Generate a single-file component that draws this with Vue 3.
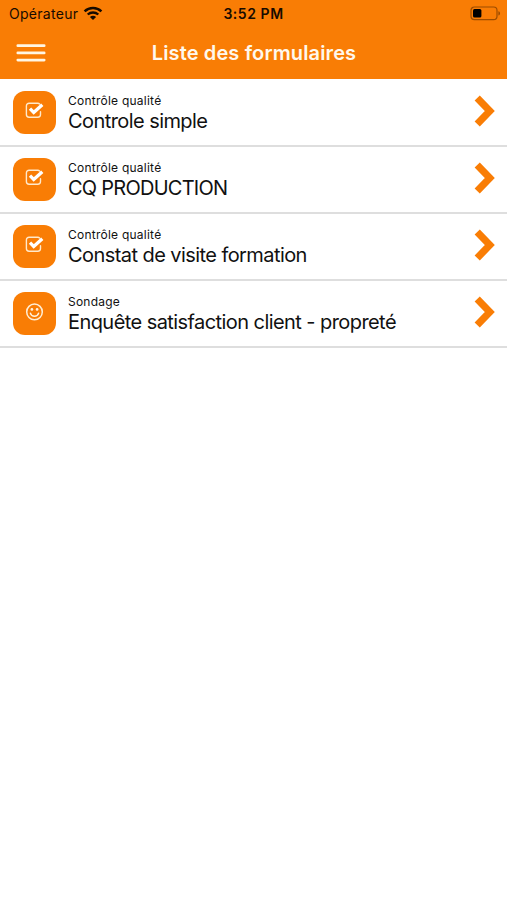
<script setup>
const forms = [
  { kind: 'Contrôle qualité', title: 'Controle simple', icon: 'check' },
  { kind: 'Contrôle qualité', title: 'CQ PRODUCTION', icon: 'check', caps: true },
  { kind: 'Contrôle qualité', title: 'Constat de visite formation', icon: 'check' },
  { kind: 'Sondage', title: 'Enquête satisfaction client - propreté', icon: 'smile' },
]
</script>

<template>
  <div class="screen">
    <header class="header">
      <div class="status">
        <div class="carrier">
          <span class="carrier-name">Opérateur</span>
          <svg class="wifi" width="20" height="15" viewBox="0 0 20 15">
            <path d="M1.6 5.3C6.3.9 13.7.9 18.4 5.3" fill="none" stroke="#170b00" stroke-width="2.5" />
            <path d="M4.7 8.5c3-2.7 7.6-2.7 10.6 0" fill="none" stroke="#170b00" stroke-width="2.3" />
            <path d="M6.9 10.9c1.8-1.6 4.4-1.6 6.2 0L10 14z" fill="#170b00" />
          </svg>
        </div>
        <span class="time">3:52 PM</span>
        <svg class="battery" width="31" height="15" viewBox="0 0 31 15">
          <rect x="1" y="1" width="26" height="12.6" rx="3.4" fill="none" stroke="#9c4c00" stroke-width="1.2" />
          <rect x="3" y="3" width="8.4" height="8.6" rx="1.5" fill="#000" />
          <path d="M28.4 5.2c2.2.7 2.2 3.6 0 4.3z" fill="#9c4c00" />
        </svg>
      </div>
      <div class="bar">
        <svg class="menu" width="30" height="20" viewBox="0 0 30 20">
          <path d="M1.8 2.7h26.4M1.8 9.9h26.4M1.8 17.1h26.4" stroke="#fff6e4" stroke-width="2.7" stroke-linecap="round" />
        </svg>
        <h1 class="heading">Liste des formulaires</h1>
      </div>
    </header>
    <ul class="list">
      <li v-for="form in forms" :key="form.title" class="row">
        <div class="tile">
          <svg v-if="form.icon === 'check'" width="20" height="18" viewBox="0 0 20 18">
            <path d="M14.6 1.9C14.1 1.4 13.5 1.2 12.8 1.2H4.1C2.5 1.2 1.4 2.3 1.4 3.9v8.7c0 1.6 1.1 2.7 2.7 2.7h8.7c1.6 0 2.7-1.1 2.7-2.7V9.7" fill="none" stroke="#ffe9cb" stroke-width="1.4" stroke-linecap="round" />
            <path d="M5 6.7l3.7 3.7L17.3 2.7" fill="none" stroke="#fff" stroke-width="3.3" />
          </svg>
          <svg v-else width="20" height="18" viewBox="0 0 20 18">
            <circle cx="9.5" cy="8.9" r="7.8" fill="none" stroke="#ffedd3" stroke-width="1.5" />
            <circle cx="6.9" cy="6.4" r="1.35" fill="#fff3df" />
            <circle cx="12.1" cy="6.4" r="1.35" fill="#fff3df" />
            <path d="M5.4 10.2c1.3 4 6.9 4 8.2 0" fill="none" stroke="#fff3df" stroke-width="1.4" stroke-linecap="round" />
          </svg>
        </div>
        <div class="texts">
          <span class="kind">{{ form.kind }}</span>
          <span class="title" :class="{ caps: form.caps }">{{ form.title }}</span>
        </div>
        <svg class="chevron" width="22" height="32" viewBox="0 0 22 32">
          <path d="M3.2 3L15.8 16 3.2 29" fill="none" stroke="#f97d05" stroke-width="7.2" />
        </svg>
      </li>
    </ul>
  </div>
</template>

<style>
body {
  background: #fff;
}
</style>

<style scoped>
.screen {
  width: 100%;
  min-height: 900px;
  background: #fff;
  color: #111;
  font-family: Inter, "Liberation Sans", sans-serif;
}
.header {
  height: 79px;
  background: #f97d05;
}
.status {
  display: grid;
  grid-template-columns: 1fr auto 1fr;
  align-items: center;
  height: 27px;
  padding: 0 6px 0 9px;
  color: #170b00;
}
.carrier {
  display: flex;
  align-items: center;
  gap: 5px;
}
.carrier-name {
  font-size: 14px;
  line-height: 20px;
  letter-spacing: 0.28px;
}
.time {
  margin-right: 3px;
  font-size: 14px;
  font-weight: 600;
  line-height: 20px;
  letter-spacing: 0.55px;
}
.battery {
  justify-self: end;
}
.bar {
  display: grid;
  grid-template-columns: 1fr auto 1fr;
  align-items: center;
  height: 52px;
  padding: 0 16px;
}
.heading {
  margin: 0 -1px 0 0;
  color: #fff8ed;
  font-size: 20px;
  font-weight: 600;
  line-height: 26px;
  letter-spacing: 0.13px;
}
.list {
  margin: 0;
  padding: 0;
  list-style: none;
}
.row {
  display: flex;
  align-items: center;
  box-sizing: border-box;
  height: 67.2px;
  padding: 0.3px 11px 0 13px;
  border-bottom: 2px solid #dedede;
}
.row:first-child {
  height: 67.6px;
  padding-top: 1.2px;
}
.tile {
  display: flex;
  justify-content: center;
  box-sizing: border-box;
  width: 43px;
  height: 43px;
  padding-top: 11px;
  border-radius: 12px;
  background: #f97d05;
}
.texts {
  display: flex;
  flex: 1;
  flex-direction: column;
  margin-left: 12px;
  padding-top: 2px;
  white-space: nowrap;
}
.kind {
  font-size: 12px;
  line-height: 16px;
  letter-spacing: 0.24px;
}
.title {
  font-size: 20px;
  line-height: 25px;
  letter-spacing: -0.57px;
}
.title.caps {
  letter-spacing: -0.75px;
}
.chevron {
  margin-bottom: 3px;
}
</style>
